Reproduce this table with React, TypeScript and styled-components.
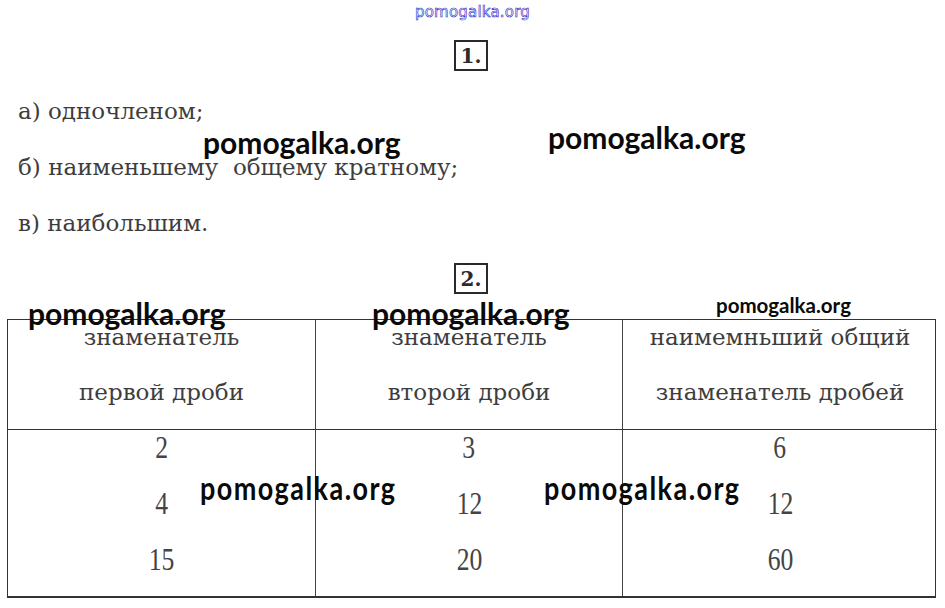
import React from 'react'
import styled, { createGlobalStyle } from 'styled-components'

const GlobalStyle = createGlobalStyle`
  html, body {
    margin: 0;
    padding: 0;
    background: #ffffff;
  }
  body {
    font-family: "DejaVu Serif", "Liberation Serif", serif;
    color: #3b3b3b;
  }
`

const Page = styled.div`
  position: relative;
  width: 945px;
  height: 608px;
  overflow: hidden;
  background: #fff;
`

const SiteMark = styled.div`
  height: 24px;
  line-height: 24px;
  text-align: center;
  font-family: "DejaVu Sans", "Liberation Sans", sans-serif;
  font-size: 15px;
  color: #ffffff;
  -webkit-text-stroke: 0.6px #2a2ac8;
  letter-spacing: 0.2px;
`

const NumberRow = styled.div<{ top: number }>`
  display: flex;
  justify-content: center;
  margin-top: ${(p) => p.top}px;
  padding-right: 3px;
`

const NumberBox = styled.div`
  box-sizing: border-box;
  width: 34px;
  height: 31px;
  border: 2px solid #2a2a2a;
  display: flex;
  align-items: center;
  justify-content: center;
  font-family: "DejaVu Serif", serif;
  font-weight: bold;
  font-size: 20px;
  color: #2b2b2b;
`

const AnswerList = styled.div`
  margin-top: 12px;
  padding-left: 18px;
`

const AnswerLine = styled.div`
  height: 56px;
  line-height: 56px;
  font-size: 23px;
  color: #3d3d3d;
  white-space: pre;
`

const Table = styled.div`
  margin: 25px 0 0 7px;
  width: 929px;
  display: grid;
  grid-template-columns: 308px 307px 314px;
  border: 1px solid #333;
  border-top-width: 1.5px;
  border-bottom-width: 2px;
  box-sizing: border-box;
`

const Cell = styled.div<{ head?: boolean; last?: boolean }>`
  height: ${(p) => (p.head ? 110 : 166)}px;
  border-right: ${(p) => (p.last ? 'none' : '1px solid #444')};
  border-bottom: ${(p) => (p.head ? '1.5px solid #333' : 'none')};
  display: flex;
  flex-direction: column;
  align-items: center;
  gap: ${(p) => (p.head ? 21 : 22)}px;
  box-sizing: border-box;
`

const HeadText = styled.div`
  height: 34px;
  line-height: 34px;
  font-size: 23px;
  color: #3d3d3d;
  white-space: nowrap;
`

const Num = styled.div`
  height: 34px;
  line-height: 34px;
  font-family: "Liberation Serif", serif;
  font-size: 27px;
  color: #444;
  transform: scale(0.95, 1.2);
`

const Watermark = styled.div<{ x: number; y: number; size?: number; tall?: boolean }>`
  position: absolute;
  left: ${(p) => p.x}px;
  top: ${(p) => p.y}px;
  font-family: Lato, "Open Sans", sans-serif;
  font-weight: 700;
  font-size: ${(p) => p.size ?? 30}px;
  line-height: 1;
  color: #0a0a0a;
  white-space: nowrap;
  transform-origin: left top;
  transform: ${(p) => (p.tall ? 'scale(0.9, 1.08)' : 'none')};
  letter-spacing: ${(p) => (p.tall ? '1.6px' : 'normal')};
`

const headers = [
  ['знаменатель', 'первой дроби'],
  ['знаменатель', 'второй дроби'],
  ['наимемньший общий', 'знаменатель дробей'],
]

const numbers = [
  ['2', '4', '15'],
  ['3', '12', '20'],
  ['6', '12', '60'],
]

export default function App() {
  return (
    <Page>
      <GlobalStyle />
      <SiteMark>pomogalka.org</SiteMark>
      <NumberRow top={16}>
        <NumberBox>1.</NumberBox>
      </NumberRow>
      <AnswerList>
        <AnswerLine>а) одночленом;</AnswerLine>
        <AnswerLine>б) наименьшему  общему кратному;</AnswerLine>
        <AnswerLine>в) наибольшим.</AnswerLine>
      </AnswerList>
      <NumberRow top={12}>
        <NumberBox>2.</NumberBox>
      </NumberRow>
      <Table>
        {headers.map((h, i) => (
          <Cell head key={'h' + i} last={i === 2}>
            {h.map((t) => (
              <HeadText key={t}>{t}</HeadText>
            ))}
          </Cell>
        ))}
        {numbers.map((col, i) => (
          <Cell key={'n' + i} last={i === 2}>
            {col.map((n, j) => (
              <Num key={j}>{n}</Num>
            ))}
          </Cell>
        ))}
      </Table>

      <Watermark x={203} y={127}>pomogalka.org</Watermark>
      <Watermark x={548} y={122}>pomogalka.org</Watermark>
      <Watermark x={28} y={298}>pomogalka.org</Watermark>
      <Watermark x={372} y={298}>pomogalka.org</Watermark>
      <Watermark x={716} y={295} size={20.5}>pomogalka.org</Watermark>
      <Watermark x={200} y={471} tall>pomogalka.org</Watermark>
      <Watermark x={544} y={471} tall>pomogalka.org</Watermark>
    </Page>
  )
}
